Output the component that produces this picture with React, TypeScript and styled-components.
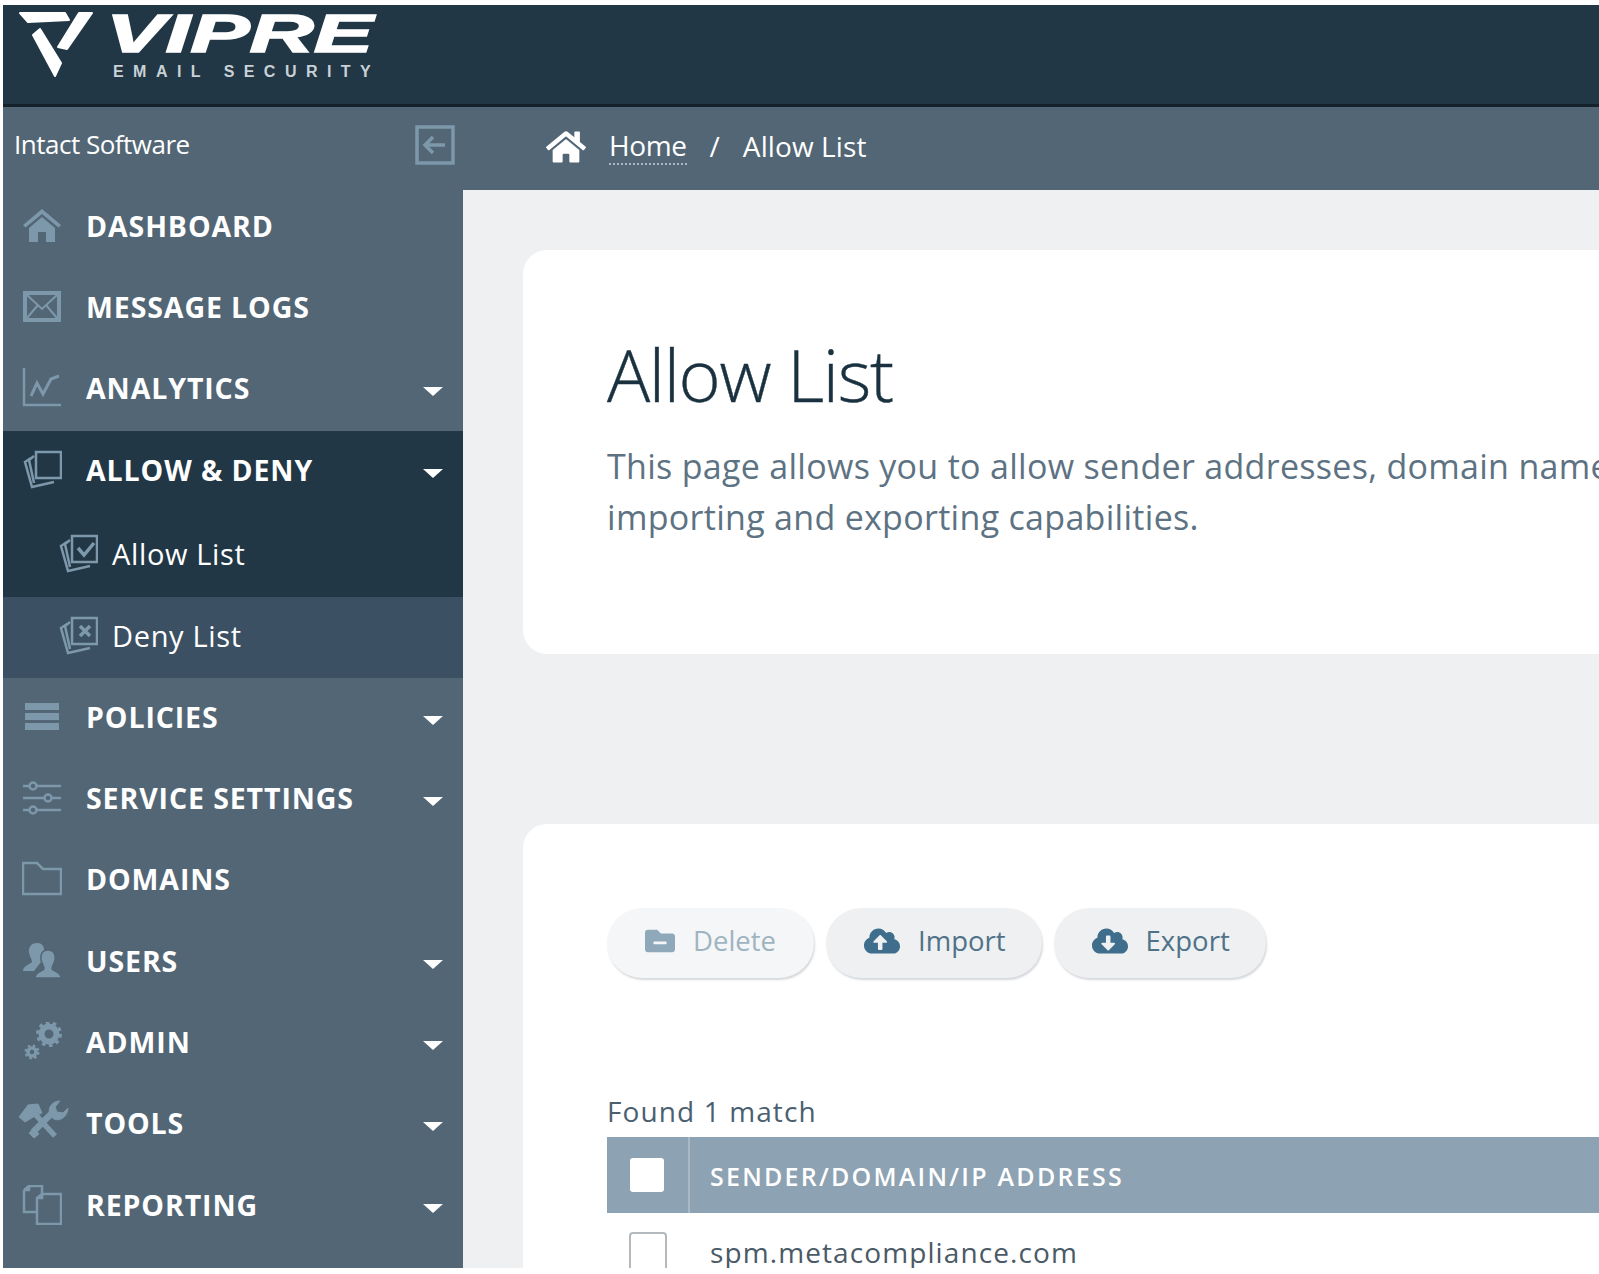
import React from "react";
import styled, { createGlobalStyle } from "styled-components";
import { FaCloudDownloadAlt, FaCloudUploadAlt, FaFolderMinus, FaHome } from "react-icons/fa";

const GlobalStyle = createGlobalStyle`
  html, body {
    margin: 0;
    padding: 0;
    background: #fff;
    overflow: hidden;
  }
  * {
    box-sizing: border-box;
  }
`;

const iconColor = "#7d98ab";

const Outline = ({ children, size = 40 }: { children: React.ReactNode; size?: number }) => (
  <svg width={size} height={size} viewBox="0 0 40 40" fill="none" stroke={iconColor} strokeWidth="2.5">
    {children}
  </svg>
);

const HomeIcon = () => (
  <svg width="40" height="40" viewBox="0 0 40 40" fill={iconColor}>
    <path d="M20 3 L1 19 L3.5 21.5 L20 8 L36.5 21.5 L39 19 Z" />
    <path d="M7 22 L20 11 L33 22 V36 H24 V26 H16 V36 H7 Z" />
  </svg>
);

const MailIcon = () => (
  <svg width="40" height="40" viewBox="0 0 40 40">
    <rect x="1" y="4" width="38" height="31" fill={iconColor} />
    <rect x="5" y="8" width="30" height="23" fill="#526675" />
    <path d="M5 8 L20 22 L35 8 M5 31 L16 18 M35 31 L24 18" fill="none" stroke={iconColor} strokeWidth="2" />
  </svg>
);

const ChartIcon = () => (
  <Outline>
    <path d="M2 0 V37 H39" />
    <path d="M9 28 L15 15 L21 26 L29 11 L37 8" strokeWidth="3" />
  </Outline>
);

const CardsIcon = ({ mark }: { mark?: "check" | "cross" }) => (
  <Outline>
    <path d="M9 8 L3 12 L10 37 L32 32" />
    <path d="M12 6 L7 10 L12 33" />
    <rect x="14" y="2" width="25" height="26" />
    {mark === "check" && <path d="M20 14 L26 21 L36 9" strokeWidth="3.5" />}
    {mark === "cross" && <path d="M22 10 L32 20 M32 10 L22 20" strokeWidth="3.5" />}
  </Outline>
);

const BarsIcon = () => (
  <svg width="40" height="40" viewBox="0 0 40 40" fill={iconColor}>
    <rect x="3" y="6" width="34" height="7" />
    <rect x="3" y="16" width="34" height="7" />
    <rect x="3" y="26" width="34" height="7" />
  </svg>
);

const SlidersIcon = () => (
  <Outline>
    <path d="M1 8 H7 M15 8 H39 M1 20 H22 M30 20 H39 M1 32 H7 M15 32 H39" />
    <circle cx="11" cy="8" r="3.5" />
    <circle cx="26" cy="20" r="3.5" />
    <circle cx="11" cy="32" r="3.5" />
  </Outline>
);

const FolderIcon = () => (
  <Outline>
    <path d="M1 4 H15 L21 10 H39 V35 H1 Z" />
  </Outline>
);

const UsersIcon = () => (
  <svg width="40" height="40" viewBox="0 0 40 40" fill={iconColor}>
    <path d="M15 2 C21 2 23 7 22 12 C21 16 19 19 19 21 L12 30 H1 C1 25 7 24 10 21 C10 18 8 16 7 12 C6 7 9 2 15 2 Z" />
    <path stroke="#526675" strokeWidth="1.5" d="M26 9 C32 9 34 14 33 19 C32 23 30 25 30 28 C33 31 39 31 39 37 H13 C13 31 19 31 22 28 C22 25 20 23 19 19 C18 14 20 9 26 9 Z" />
  </svg>
);

const GearsIcon = () => (
  <svg width="40" height="40" viewBox="0 0 40 40" fill="none" stroke={iconColor}>
    <circle cx="27" cy="12" r="7.5" strokeWidth="6" />
    <circle cx="27" cy="12" r="11" strokeWidth="4" strokeDasharray="3.45 3.45" />
    <circle cx="10" cy="30" r="4" strokeWidth="3.5" />
    <circle cx="10" cy="30" r="6.3" strokeWidth="2.5" strokeDasharray="2.5 2.45" />
  </svg>
);

const ToolsIcon = () => (
  <svg width="60" height="60" viewBox="0 0 60 60" fill={iconColor} stroke={iconColor}>
    <path d="M7 24 L16 12 L26 11 L30 20 L23 23 L18 26 L13 29 Z" strokeLinejoin="round" />
    <path d="M22 20 L43 43" strokeWidth="5.5" fill="none" />
    <path d="M21 39 L39 21" strokeWidth="6.5" fill="none" />
    <path d="M22 35 L27 41 L22 45 L17 40 Z" />
    <path d="M38 23 C35 15 40 8 48 8 L43 14 L45 19 L51 20 L56 15 C56 23 48 29 42 26 Z" />
  </svg>
);

const DocsIcon = () => (
  <Outline>
    <path d="M2 5 L7 1 H20 V13 M2 5 V27 H15 M2 5 H7 V1" />
    <path d="M15 13 L20 9 H39 V39 H15 Z M15 13 H20 V9" />
  </Outline>
);

const CollapseIcon = () => (
  <svg width="40" height="40" viewBox="0 0 40 40" fill="none" stroke={iconColor}>
    <rect x="2" y="2" width="36" height="36" strokeWidth="3.5" />
    <path d="M10 20 H30 M18 12 L10 20 L18 28" strokeWidth="3.5" />
  </svg>
);

const LogoMark = () => (
  <svg width="76" height="68" viewBox="0 0 76 68" fill="#fff" stroke="#fff" strokeWidth="2" strokeLinejoin="round">
    <path d="M2 1 H47 L51 8 L10 10 Z" />
    <path d="M61 1 H74 L49 37 L40 35 Z" />
    <path d="M15 23 L22 17 L43 51 L37 64 Z" />
  </svg>
);

type NavEntry = {
  label: string;
  icon: React.ReactNode;
  caret?: boolean;
  open?: boolean;
};

const navTop: NavEntry[] = [
  { label: "Dashboard", icon: <HomeIcon /> },
  { label: "Message Logs", icon: <MailIcon /> },
  { label: "Analytics", icon: <ChartIcon />, caret: true },
  { label: "Allow & Deny", icon: <CardsIcon />, caret: true, open: true },
];

const navBottom: NavEntry[] = [
  { label: "Policies", icon: <BarsIcon />, caret: true },
  { label: "Service Settings", icon: <SlidersIcon />, caret: true },
  { label: "Domains", icon: <FolderIcon /> },
  { label: "Users", icon: <UsersIcon />, caret: true },
  { label: "Admin", icon: <GearsIcon />, caret: true },
  { label: "Tools", icon: <ToolsIcon />, caret: true },
  { label: "Reporting", icon: <DocsIcon />, caret: true },
];

const NavItem = ({ entry }: { entry: NavEntry }) => (
  <NavRow $open={entry.open}>
    <NavIcon>{entry.icon}</NavIcon>
    <NavLabel>{entry.label}</NavLabel>
    {entry.caret && <Caret />}
  </NavRow>
);

const App = () => {
  return (
    <Page>
      <GlobalStyle />
      <Header>
        <Logo>
          <LogoMark />
          <LogoWords>
            <LogoName>VIPRE</LogoName>
            <LogoTag>EMAIL SECURITY</LogoTag>
          </LogoWords>
        </Logo>
      </Header>
      <Body>
        <Sidebar>
          <SideHead>
            <Company>Intact Software</Company>
            <CollapseIcon />
          </SideHead>
          {navTop.map((entry) => (
            <NavItem key={entry.label} entry={entry} />
          ))}
          <SubRow $active>
            <CardsIcon mark="check" />
            <span>Allow List</span>
          </SubRow>
          <SubRow>
            <CardsIcon mark="cross" />
            <span>Deny List</span>
          </SubRow>
          {navBottom.map((entry) => (
            <NavItem key={entry.label} entry={entry} />
          ))}
        </Sidebar>
        <Main>
          <Breadcrumb>
            <FaHome size={40} color="#fff" />
            <CrumbLink>Home</CrumbLink>
            <CrumbSep>/</CrumbSep>
            <CrumbCurrent>Allow List</CrumbCurrent>
          </Breadcrumb>
          <Content>
            <IntroCard>
              <Title>Allow List</Title>
              <Lead>
                This page allows you to allow sender addresses, domain names
                <br />
                importing and exporting capabilities.
              </Lead>
            </IntroCard>
            <ListCard>
              <Toolbar>
                <ActionButton $disabled>
                  <FaFolderMinus size={30} />
                  Delete
                </ActionButton>
                <ActionButton>
                  <FaCloudUploadAlt size={36} />
                  Import
                </ActionButton>
                <ActionButton>
                  <FaCloudDownloadAlt size={36} />
                  Export
                </ActionButton>
              </Toolbar>
              <MatchCount>Found 1 match</MatchCount>
              <TableHead>
                <CheckCell>
                  <HeadCheck />
                </CheckCell>
                <HeadText>SENDER/DOMAIN/IP ADDRESS</HeadText>
              </TableHead>
              <TableRow>
                <BodyCheckCell>
                  <RowCheck />
                </BodyCheckCell>
                <RowText>spm.metacompliance.com</RowText>
              </TableRow>
            </ListCard>
          </Content>
        </Main>
      </Body>
    </Page>
  );
};

const Page = styled.div`
  width: 1599px;
  height: 1263px;
  margin-top: 5px;
  padding-left: 3px;
  overflow: hidden;
  display: flex;
  flex-direction: column;
  font-family: "Open Sans", "Noto Sans", sans-serif;
`;

const Header = styled.header`
  height: 102px;
  flex: none;
  background: #223746;
  border-bottom: 3px solid #15222c;
  padding: 7px 0 0 15px;
`;

const Logo = styled.div`
  display: flex;
  gap: 17px;
  align-items: flex-start;
`;

const LogoWords = styled.div`
  display: flex;
  flex-direction: column;
`;

const LogoName = styled.div`
  margin-left: -5px;
  font-family: "Liberation Sans", sans-serif;
  font-weight: 700;
  font-style: italic;
  font-size: 53px;
  line-height: 44px;
  color: #fff;
  transform: scaleX(1.68);
  transform-origin: left center;
  -webkit-text-stroke: 1.5px #fff;
`;

const LogoTag = styled.div`
  margin-top: 7px;
  margin-left: 2px;
  font-family: "Liberation Sans", sans-serif;
  font-weight: 700;
  font-size: 16px;
  line-height: 18px;
  letter-spacing: 9.45px;
  color: #c9d1d6;
  white-space: nowrap;
`;

const Body = styled.div`
  flex: 1;
  min-height: 0;
  display: flex;
`;

const Sidebar = styled.nav`
  width: 460px;
  flex: none;
  background: #526675;
`;

const SideHead = styled.div`
  height: 80px;
  display: flex;
  align-items: center;
  justify-content: space-between;
  padding: 0 8px 5px 11px;
`;

const Company = styled.div`
  color: #fff;
  font-size: 26px;
  letter-spacing: -0.5px;
  margin-bottom: 1px;
`;

const NavRow = styled.div<{ $open?: boolean }>`
  height: ${(p) => (p.$open ? "82.6px" : "81.33px")};
  display: flex;
  align-items: center;
  padding: 0 20px 4px 19px;
  background: ${(p) => (p.$open ? "#223746" : "transparent")};
`;

const NavIcon = styled.span`
  width: 40px;
  height: 40px;
  flex: none;
  display: flex;
  align-items: center;
  justify-content: center;
  svg {
    flex: none;
  }
`;

const NavLabel = styled.span`
  flex: 1;
  margin-left: 24px;
  color: #fff;
  font-size: 28.5px;
  font-weight: 700;
  text-transform: uppercase;
  letter-spacing: 0.9px;
  white-space: nowrap;
`;

const Caret = styled.span`
  width: 0;
  height: 0;
  border-left: 10px solid transparent;
  border-right: 10px solid transparent;
  border-top: 9px solid #fff;
  margin-top: 7px;
`;

const SubRow = styled.div<{ $active?: boolean }>`
  height: ${(p) => (p.$active ? "83px" : "81.4px")};
  display: flex;
  align-items: center;
  gap: 14px;
  padding: 0 0 3px 55px;
  color: #fff;
  font-size: 29px;
  letter-spacing: 0.65px;
  background: ${(p) => (p.$active ? "#223746" : "#3c5063")};
`;

const Main = styled.main`
  flex: 1;
  min-width: 0;
  display: flex;
  flex-direction: column;
`;

const Breadcrumb = styled.div`
  height: 83px;
  flex: none;
  background: #526675;
  display: flex;
  align-items: center;
  padding: 0 0 6px 83px;
  color: #fff;
  font-size: 28px;
  svg {
    margin-top: 3px;
  }
`;

const CrumbLink = styled.span`
  margin-left: 23px;
  border-bottom: 2px dotted #a9b8c3;
  line-height: 36px;
  letter-spacing: -0.4px;
`;

const CrumbSep = styled.span`
  margin: 0 23px;
`;

const CrumbCurrent = styled.span`
  letter-spacing: 0.1px;
`;

const Content = styled.div`
  flex: 1;
  background: #eef0f2;
  padding: 60px 0 0 60px;
  overflow: hidden;
`;

const Card = styled.section`
  width: 1400px;
  background: #fff;
  border-radius: 24px;
  padding-left: 84px;
`;

const IntroCard = styled(Card)`
  height: 404px;
  padding-top: 79px;
`;

const ListCard = styled(Card)`
  margin-top: 170px;
  padding-top: 84px;
  height: 600px;
`;

const Title = styled.h1`
  margin: 0;
  font-size: 72px;
  font-weight: 300;
  line-height: 90px;
  letter-spacing: -1.4px;
  color: #1a3140;
  -webkit-text-stroke: 0.4px #1a3140;
`;

const Lead = styled.p`
  margin: 22px 0 0;
  font-size: 34px;
  line-height: 51px;
  letter-spacing: 0.3px;
  color: #5d7282;
  white-space: nowrap;
`;

const Toolbar = styled.div`
  display: flex;
  gap: 12px;
`;

const ActionButton = styled.button<{ $disabled?: boolean }>`
  height: 70px;
  padding: 0 ${(p) => (p.$disabled ? "38px" : "36px")} 5px 38px;
  display: flex;
  align-items: center;
  gap: 18px;
  border: none;
  border-radius: 35px;
  background: ${(p) => (p.$disabled ? "#f5f6f7" : "#eef0f2")};
  box-shadow: 1px 2px 2px rgba(90, 100, 110, 0.25);
  font-family: inherit;
  font-size: 27.5px;
  color: ${(p) => (p.$disabled ? "#9fb4c1" : "#4f7288")};
  svg {
    color: ${(p) => (p.$disabled ? "#8fa9ba" : "#3f6d8c")};
  }
`;

const MatchCount = styled.div`
  margin-top: 114px;
  font-size: 28px;
  line-height: 38px;
  letter-spacing: 1.1px;
  color: #4a6070;
`;

const TableHead = styled.div`
  width: 1300px;
  height: 76px;
  margin-top: 7px;
  display: flex;
  align-items: center;
  background: #8da2b2;
`;

const CheckCell = styled.div`
  width: 83px;
  height: 100%;
  flex: none;
  display: flex;
  align-items: center;
  justify-content: center;
  padding-right: 1px;
  border-right: 2px solid #a9bac6;
`;

const HeadCheck = styled.div`
  width: 34px;
  height: 34px;
  background: #fff;
  border-radius: 3px;
`;

const HeadText = styled.div`
  margin: 2px 0 0 20px;
  color: #fff;
  font-size: 25px;
  font-weight: 600;
  letter-spacing: 2.25px;
`;

const TableRow = styled.div`
  display: flex;
  align-items: center;
  height: 78px;
`;

const BodyCheckCell = styled.div`
  width: 81px;
  flex: none;
  display: flex;
  justify-content: center;
  padding-top: 4px;
`;

const RowCheck = styled.div`
  width: 38px;
  height: 44px;
  background: #fff;
  border: 2px solid #b4b9bd;
  border-radius: 4px;
`;

const RowText = styled.div`
  margin-left: 22px;
  font-size: 28px;
  letter-spacing: 1.1px;
  color: #4a5a66;
`;

export default App;
